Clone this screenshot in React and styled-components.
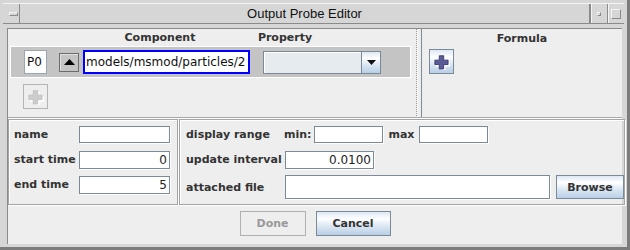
import React from 'react'
import styled, { createGlobalStyle, css } from 'styled-components'

const GlobalStyle = createGlobalStyle`
	html, body {
		margin: 0;
		padding: 0;
		background: #d6d6d6;
	}
	body {
		font-family: 'DejaVu Sans', 'Liberation Sans', sans-serif;
	}
	* {
		box-sizing: border-box;
	}
`

const ocean = css`
	background: linear-gradient(180deg, #dde8f3 0%, #ffffff 30%, #dde8f3 60%, #b8cfe5 100%);
`

const boldLabel = css`
	font-family: 'DejaVu Sans', sans-serif;
	font-weight: bold;
	font-size: 11px;
	color: #333333;
	white-space: nowrap;
`

const Window = styled.div`
	width: 630px;
	height: 250px;
	background: #d6d6d6;
	border-right: 3px solid #7c7c7c;
	border-bottom: 3px solid #7c7c7c;
	padding: 3px 0 0 3px;
	display: flex;
	flex-direction: column;
`

const TitleBar = styled.div`
	display: flex;
	height: 21px;
	margin-right: 3px;
	border-top: 1px solid #f4f4f4;
	border-bottom: 1px solid #8a8a8a;
`

const FrameBtn = styled.div`
	width: 17px;
	display: flex;
	align-items: center;
	justify-content: center;
	border-left: ${p => (p.$left ? 'none' : '1px solid #8a8a8a')};
	border-right: ${p => (p.$left ? '1px solid #8a8a8a' : 'none')};
	box-shadow: ${p => (p.$left ? 'none' : 'inset 1px 0 0 #f4f4f4')};
`

const MenuGlyph = styled.div`
	width: 9px;
	height: 4px;
	border: 1px solid #8a8a8a;
	border-top-color: #f4f4f4;
	border-left-color: #f4f4f4;
	margin-left: 4px;
`

const MinGlyph = styled.div`
	width: 4px;
	height: 4px;
	border: 1px solid #8a8a8a;
	border-top-color: #f4f4f4;
	border-left-color: #f4f4f4;
`

const MaxGlyph = styled.div`
	width: 10px;
	height: 10px;
	border: 1px solid #8a8a8a;
	border-top-color: #f4f4f4;
	border-left-color: #f4f4f4;
`

const Title = styled.div`
	flex: 1;
	display: flex;
	align-items: center;
	justify-content: center;
	font-family: 'Liberation Sans', sans-serif;
	font-size: 13px;
	color: #111111;
	border-right: 1px solid #8a8a8a;
`

const Content = styled.div`
	flex: 1;
	margin: 4px 5px 3px 4px;
	background: #eeeeee;
	border-top: 1px solid #8a8a8a;
	border-left: 1px solid #8a8a8a;
	display: flex;
	flex-direction: column;
`

const TopPanel = styled.div`
	display: flex;
	height: 89px;
	border-bottom: 1px solid #a8a8a8;
`

const LeftPane = styled.div`
	width: 406px;
	display: flex;
	flex-direction: column;
`

const HeaderRow = styled.div`
	height: 17px;
	display: grid;
	grid-template-columns: 82px 140px 10px 90px;
	align-items: center;
`

const HeaderCell = styled.div`
	${boldLabel}
	text-align: center;
	grid-column: ${p => p.$col};
`

const Band = styled.div`
	margin-left: 2px;
	width: 401px;
	height: 32px;
	background: #c4c4c4;
	border: 1px solid #ffffff;
	display: flex;
	align-items: center;
	padding-left: 13px;
`

const IdBox = styled.div`
	width: 23px;
	height: 24px;
	background: #ffffff;
	border: 1px solid #9aa6b2;
	font-size: 12px;
	color: #111;
	display: flex;
	align-items: center;
	padding-left: 2px;
	margin-right: 12px;
`

const UpBtn = styled.div`
	width: 20px;
	height: 19px;
	background: #c4c4c4;
	border: 1px solid #6c6c6c;
	box-shadow: inset 1px 1px 0 #e0e0e0;
	display: flex;
	align-items: center;
	justify-content: center;
	margin-right: 4px;
`

const PathField = styled.div`
	width: 167px;
	height: 24px;
	background: #ffffff;
	border: 2px solid #0000ff;
	font-size: 12px;
	color: #111;
	display: flex;
	align-items: center;
	padding-left: 1px;
	white-space: nowrap;
	overflow: hidden;
	margin-right: 13px;
`

const Combo = styled.div`
	width: 118px;
	height: 23px;
	display: flex;
	border: 1px solid #7a8a99;
`

const ComboField = styled.div`
	flex: 1;
	background: #e6ebf0;
	border-right: 1px solid #7a8a99;
	box-shadow: inset 1px 1px 0 #ffffff;
`

const ComboArrow = styled.div`
	width: 18px;
	${ocean}
	display: flex;
	align-items: center;
	justify-content: center;
`

const AddRow = styled.div`
	padding: 6px 0 0 15px;
`

const IconBtn = styled.div`
	width: 25px;
	height: 25px;
	display: flex;
	align-items: center;
	justify-content: center;
	border: 1px solid ${p => (p.$disabled ? '#b4b4b4' : '#7a8a99')};
	${p => (p.$disabled ? 'background: #eeeeee;' : ocean)}
`

const Divider = styled.div`
	width: 8px;
	display: flex;
	justify-content: space-between;
	padding-left: 2px;
`

const Dots = styled.div`
	width: 2px;
	background-image:
		linear-gradient(#9a9a9a 1px, transparent 1px),
		linear-gradient(#ffffff 1px, transparent 1px);
	background-size: 1px 2px, 1px 2px;
	background-position: 0 0, 1px 1px;
	background-repeat: repeat-y;
`

const SplitLine = styled.div`
	width: 1px;
	background: #7a8a99;
`

const RightPane = styled.div`
	flex: 1;
	display: flex;
	flex-direction: column;
`

const FormulaHeader = styled.div`
	${boldLabel}
	height: 19px;
	display: flex;
	align-items: center;
	justify-content: center;
`

const FormulaBody = styled.div`
	padding: 1px 0 0 7px;
`

const BottomPanel = styled.div`
	height: 87px;
	display: flex;
	gap: 1px;
	border-top: 1px solid #ffffff;
`

const Group = styled.div`
	width: ${p => p.$width || 'auto'};
	flex: ${p => (p.$width ? 'none' : 1)};
	border: 1px solid #a4a4a4;
	box-shadow: inset 1px 1px 0 #ffffff, 1px 1px 0 #ffffff;
	display: grid;
	grid-template-columns: ${p => p.$cols};
	grid-template-rows: ${p => p.$rows};
	align-items: center;
	padding: 2px 0 0 ${p => p.$pad}px;
`

const Label = styled.div`
	${boldLabel}
`

const InlineLabel = styled.span`
	${boldLabel}
	margin: 0 ${p => p.$gap || 3}px 0 ${p => p.$lead || 0}px;
`

const Field = styled.div`
	width: ${p => p.$w}px;
	height: ${p => p.$h || 18}px;
	background: #ffffff;
	border: 1px solid #7a8a99;
	box-shadow: 1px 1px 0 #ffffff;
	font-size: 12px;
	color: #222;
	display: flex;
	align-items: center;
	justify-content: flex-end;
	padding-right: 2px;
`

const Inline = styled.div`
	display: flex;
	align-items: center;
`

const Button = styled.div`
	width: ${p => p.$w}px;
	height: ${p => p.$h || 25}px;
	border: 1px solid ${p => (p.$disabled ? '#b0b0b0' : '#7a8a99')};
	${p => (p.$disabled ? 'background: #eeeeee;' : ocean)}
	${boldLabel}
	color: ${p => (p.$disabled ? '#999999' : '#333333')};
	display: flex;
	align-items: center;
	justify-content: center;
	margin-left: ${p => p.$ml || 0}px;
`

const ButtonRow = styled.div`
	flex: 1;
	display: flex;
	justify-content: center;
	align-items: flex-start;
	padding-top: 6px;
	gap: 10px;
`

const Plus = ({ fill, edge }) => (
	<svg width="16" height="16" viewBox="0 0 16 16">
		<path d="M6 2h5v5h5v5h-5v4H6v-4H1V7h5z" fill="#ffffff" transform="translate(0.5 0.5)" />
		<path d="M5 1h5v5h5v5h-5v5H5v-5H0V6h5z" fill={fill} stroke={edge} strokeWidth="1" transform="scale(0.88) translate(1 1)" />
	</svg>
)

const TriUp = () => (
	<svg width="11" height="6" viewBox="0 0 11 6"><path d="M5.5 0L11 6H0z" fill="#000" /></svg>
)

const TriDown = () => (
	<svg width="9" height="5" viewBox="0 0 9 5"><path d="M0 0h9L4.5 5z" fill="#111" /></svg>
)

const App = () => (
	<>
		<GlobalStyle />
		<Window>
			<TitleBar>
				<FrameBtn $left><MenuGlyph /></FrameBtn>
				<Title>Output Probe Editor</Title>
				<FrameBtn><MinGlyph /></FrameBtn>
				<FrameBtn><MaxGlyph /></FrameBtn>
			</TitleBar>
			<Content>
				<TopPanel>
					<LeftPane>
						<HeaderRow>
							<HeaderCell $col={2}>Component</HeaderCell>
							<HeaderCell $col={4}>Property</HeaderCell>
						</HeaderRow>
						<Band>
							<IdBox>P0</IdBox>
							<UpBtn><TriUp /></UpBtn>
							<PathField>models/msmod/particles/2</PathField>
							<Combo>
								<ComboField />
								<ComboArrow><TriDown /></ComboArrow>
							</Combo>
						</Band>
						<AddRow>
							<IconBtn $disabled><Plus fill="#cccccc" edge="#c0c0c0" /></IconBtn>
						</AddRow>
					</LeftPane>
					<Divider>
						<Dots />
						<SplitLine />
					</Divider>
					<RightPane>
						<FormulaHeader>Formula</FormulaHeader>
						<FormulaBody>
							<IconBtn><Plus fill="#5b5b98" edge="#35356a" /></IconBtn>
						</FormulaBody>
					</RightPane>
				</TopPanel>
				<BottomPanel>
					<Group $width="170px" $cols="65px 92px" $rows="25px 25px 25px" $pad={5}>
						<Label>name</Label>
						<Field $w={91} $h={17} />
						<Label>start time</Label>
						<Field $w={91}>0</Field>
						<Label>end time</Label>
						<Field $w={91}>5</Field>
					</Group>
					<Group $cols="99px 1fr" $rows="25px 25px 30px" $pad={6}>
						<Label>display range</Label>
						<Inline>
							<InlineLabel $lead={-1}>min:</InlineLabel>
							<Field $w={69} $h={17} />
							<InlineLabel $lead={5} $gap={5}>max</InlineLabel>
							<Field $w={69} $h={17} />
						</Inline>
						<Label>update interval</Label>
						<Field $w={89}>0.0100</Field>
						<Label>attached file</Label>
						<Inline>
							<Field $w={265} $h={24} />
							<Button $w={68} $h={24} $ml={6}>Browse</Button>
						</Inline>
					</Group>
				</BottomPanel>
				<ButtonRow>
					<Button $w={66} $disabled>Done</Button>
					<Button $w={75}>Cancel</Button>
				</ButtonRow>
			</Content>
		</Window>
	</>
)

export default App
